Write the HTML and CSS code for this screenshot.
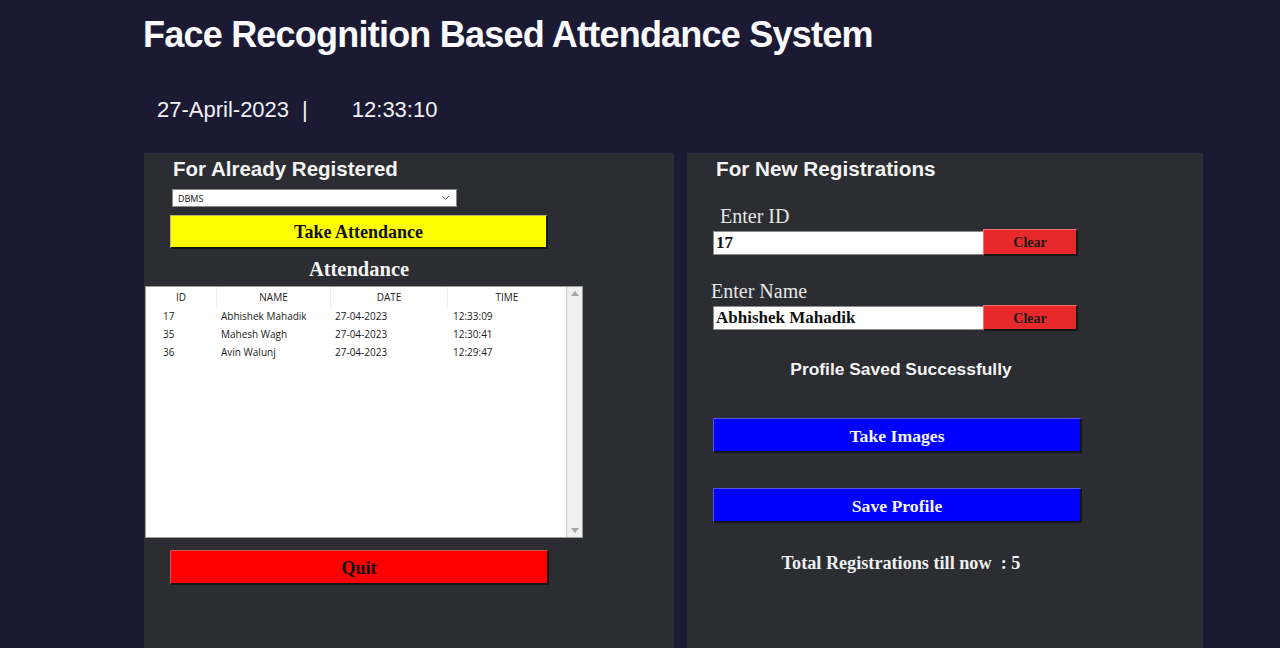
FILE: index.html
```html
<!DOCTYPE html>
<html>
<head>
<meta charset="utf-8">
<title>Face Recognition Based Attendance System</title>
<link rel="stylesheet" href="styles.css">
</head>
<body>
<header class="header">
  <h1 class="title">Face Recognition Based Attendance System</h1>
  <div class="clock"><span>27-April-2023</span><span class="pipe">|</span><span class="time">12:33:10</span></div>
</header>
<main class="main">
  <section class="panel panel-left">
    <h2 class="panel-title">For Already Registered</h2>
    <div class="combo"><span>DBMS</span><svg class="chev" width="9" height="6" viewBox="0 0 9 6"><path d="M1 1 L4.5 4.5 L8 1" fill="none" stroke="#606060" stroke-width="1"/></svg></div>
    <button class="btn btn-yellow">Take Attendance</button>
    <div class="att-label">Attendance</div>
    <div class="table">
      <div class="table-body">
        <div class="thead">
          <div class="th c-id">ID</div>
          <div class="th c-name">NAME</div>
          <div class="th c-date">DATE</div>
          <div class="th c-time">TIME</div>
        </div>
        <div class="tr"><div class="td c-id pid">17</div><div class="td c-name">Abhishek Mahadik</div><div class="td c-date">27-04-2023</div><div class="td c-time">12:33:09</div></div>
        <div class="tr"><div class="td c-id pid">35</div><div class="td c-name">Mahesh Wagh</div><div class="td c-date">27-04-2023</div><div class="td c-time">12:30:41</div></div>
        <div class="tr"><div class="td c-id pid">36</div><div class="td c-name">Avin Walunj</div><div class="td c-date">27-04-2023</div><div class="td c-time">12:29:47</div></div>
      </div>
      <div class="scrollbar">
        <svg width="8" height="5" viewBox="0 0 8 5"><path d="M0 5 L4 0 L8 5 Z" fill="#a6a6a6"/></svg>
        <svg width="8" height="5" viewBox="0 0 8 5"><path d="M0 0 L4 5 L8 0 Z" fill="#a6a6a6"/></svg>
      </div>
    </div>
    <button class="btn btn-red quit">Quit</button>
  </section>
  <section class="panel panel-right">
    <h2 class="panel-title">For New Registrations</h2>
    <div class="label label-id">Enter ID</div>
    <div class="field-row">
      <div class="input">17</div>
      <button class="btn btn-clear">Clear</button>
    </div>
    <div class="label label-name">Enter Name</div>
    <div class="field-row row2">
      <div class="input">Abhishek Mahadik</div>
      <button class="btn btn-clear">Clear</button>
    </div>
    <div class="status">Profile Saved Successfully</div>
    <button class="btn btn-blue take">Take Images</button>
    <button class="btn btn-blue save">Save Profile</button>
    <div class="total">Total Registrations till now&nbsp; : 5</div>
  </section>
</main>
</body>
</html>
```
FILE: styles.css
```css
* { box-sizing: border-box; }
html, body { margin: 0; padding: 0; }
body {
  background: #1b1a32;
  width: 1280px;
  height: 648px;
  overflow: hidden;
  font-family: "Liberation Sans", Arial, sans-serif;
  color: #f4f4f4;
}
.header { padding: 15px 0 0 143px; }
.title {
  margin: 0;
  font-size: 36px;
  line-height: 40px;
  font-weight: bold;
  letter-spacing: -0.78px;
  color: #fbfbff;
}
.clock {
  margin: 42px 0 0 14px;
  font-size: 22px;
  line-height: 26px;
  color: #f2f2f2;
  display: flex;
}
.pipe { margin-left: 13px; }
.time { margin-left: 44px; }

.main {
  display: flex;
  gap: 13px;
  margin: 30px 0 0 144px;
}
.panel {
  background: #2b2d32;
  height: 500px;
  display: flex;
  flex-direction: column;
  align-items: flex-start;
}
.panel-left { width: 530px; }
.panel-right { width: 516px; }
.panel-title {
  margin: 4px 0 0 29px;
  font-size: 20.5px;
  line-height: 24px;
  font-weight: bold;
  color: #f4f4f4;
}
.panel-right .panel-title { font-size: 20.7px; }
.combo {
  margin: 8px 0 0 28px;
  width: 285px;
  height: 18px;
  background: #fff;
  border: 1px solid #8a8a8a;
  display: flex;
  align-items: center;
  justify-content: space-between;
  padding: 0 6px 0 5px;
  font-family: "Open Sans", "Noto Sans", sans-serif;
  font-size: 9px;
  color: #111;
}
.btn {
  font-family: "Liberation Serif", "Times New Roman", serif;
  font-weight: bold;
  padding: 2px 0 0;
  border-style: solid;
  cursor: pointer;
  display: flex;
  align-items: center;
  justify-content: center;
}
.btn-yellow {
  margin: 8px 0 0 26px;
  width: 378px;
  height: 34px;
  background: #ffff00;
  color: #111;
  font-size: 18px;
  border-width: 1px 2px 2px 1px;
  border-color: #b8b860 #151515 #151515 #b8b860;
}
.att-label {
  margin: 8px 0 0 26px;
  width: 378px;
  text-align: center;
  font-family: "Liberation Serif", "Times New Roman", serif;
  font-weight: bold;
  font-size: 20.5px;
  line-height: 24px;
  color: #f4f4f4;
}
.table {
  margin: 5px 0 0 1px;
  width: 438px;
  height: 252px;
  background: #fff;
  border: 1px solid #9a9a9a;
  display: flex;
  font-family: "Open Sans", "Noto Sans", sans-serif;
  font-size: 10px;
  color: #1a1a1a;
}
.table-body { flex: 1; }
.thead { display: flex; height: 20px; align-items: center; }
.tr { display: flex; height: 18px; align-items: center; }
.c-id { width: 71px; }
.c-name { width: 114px; }
.c-date { width: 117px; }
.c-time { width: 118px; }
.th {
  text-align: center;
  height: 20px;
  line-height: 20px;
  border-right: 1px solid #eeeeee;
}
.th.c-time { border-right: none; }
.td { padding-left: 4px; white-space: nowrap; }
.td.pid { padding-left: 17px; }
.td.c-time { padding-left: 5px; }
.scrollbar {
  width: 16px;
  background: #f0f0f0;
  border-left: 1px solid #c4c4c4;
  display: flex;
  flex-direction: column;
  align-items: center;
  justify-content: space-between;
  padding: 4px 0 4px;
}
.btn-red {
  background: #ff0000;
  color: #111;
  font-size: 18px;
  border-width: 1px 2px 2px 1px;
  border-color: #d85050 #151515 #151515 #d85050;
}
.quit {
  margin: 12px 0 0 26px;
  width: 379px;
  height: 35px;
}

.label {
  font-family: "Liberation Serif", "Times New Roman", serif;
  font-size: 20px;
  line-height: 24px;
  color: #e6e6e6;
}
.label-id { margin: 23px 0 0 33px; }
.label-name { margin: 23px 0 0 24px; }
.field-row {
  margin: 1px 0 0 26px;
  display: flex;
  align-items: center;
  height: 27px;
}
.row2 { margin-top: 2px; height: 26px; }
.input {
  width: 270px;
  height: 24px;
  background: #fff;
  border-style: solid;
  border-width: 1px 0 1px 1px;
  border-color: #8c8c8c;
  padding-left: 2px;
  font-family: "Liberation Serif", "Times New Roman", serif;
  font-weight: bold;
  font-size: 17px;
  line-height: 22px;
  color: #111;
}
.btn-clear {
  width: 95px;
  height: 27px;
  background: #e8292b;
  color: #1a1a1a;
  font-size: 14px;
  border-width: 1px 2px 2px 1px;
  border-color: #f07070 #151515 #151515 #f07070;
}
.row2 .btn-clear { height: 26px; }
.status {
  margin: 26px 0 0 26px;
  width: 376px;
  text-align: center;
  font-size: 17.4px;
  line-height: 24px;
  font-weight: bold;
  color: #f4f4f4;
}
.btn-blue {
  width: 369px;
  height: 35px;
  margin-left: 26px;
  background: #0000ff;
  color: #f4f4f4;
  font-size: 17.7px;
  border-width: 1px 2px 2px 1px;
  border-color: #5555ee #151515 #151515 #5555ee;
}
.take { margin-top: 37px; }
.save { margin-top: 35px; }
.total {
  margin: 28px 0 0 26px;
  width: 376px;
  text-align: center;
  font-family: "Liberation Serif", "Times New Roman", serif;
  font-weight: bold;
  font-size: 18.2px;
  line-height: 24px;
  color: #f0f0f0;
}
```
